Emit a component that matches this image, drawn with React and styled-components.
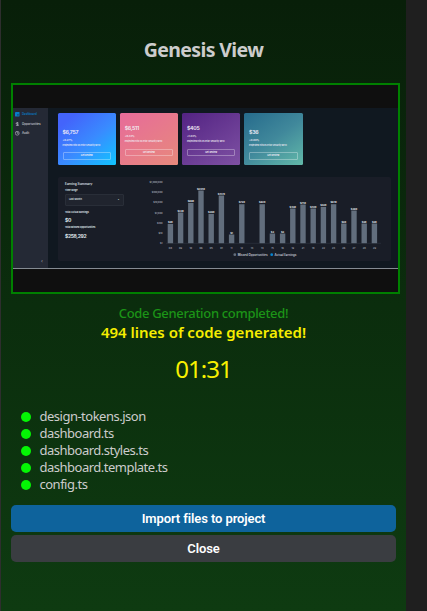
import React from 'react';
import styled, { createGlobalStyle } from 'styled-components';

const Global = createGlobalStyle`
  * { box-sizing: border-box; }
  body { margin: 0; background: #1f1f1f; overflow: hidden; }
`;

const Page = styled.div`
  width: 427px;
  height: 611px;
  padding-left: 1px;
  background: linear-gradient(90deg, #2e2e2e 1px, #1f1f1f 1px);
`;
const Panel = styled.main`
  width: 405px;
  height: 611px;
  padding: 36px 6px 0 10px;
  display: flex;
  flex-direction: column;
  background: linear-gradient(180deg, #081f09 0%, #0e3b11 100%);
  font-family: 'Noto Sans', 'Open Sans', sans-serif;
  color: #cccccc;
`;
const Title = styled.h1`
  width: 385px;
  height: 47px;
  margin: 0;
  font-size: 19.5px;
  line-height: 28px;
  font-weight: 700;
  letter-spacing: -0.62px;
  text-align: center;
  white-space: nowrap;
`;
const Preview = styled.section`
  flex: none;
  width: 389px;
  height: 211px;
  padding: 23px 0;
  border: 2px solid #008000;
  background: #0f0f0f;
`;
const Dashboard = styled.div`
  display: flex;
  height: 161px;
  border-bottom: 1px solid #848b92;
  background: #101820;
  font-family: Inter, sans-serif;
  color: #dfe2e7;
`;
const Sidebar = styled.nav`
  display: flex;
  flex-direction: column;
  width: 35px;
  padding: 1.5px 0 0 2px;
  background: #242935;
`;
const NavItem = styled.div`
  display: flex;
  align-items: center;
  gap: 2.5px;
  height: 9.7px;
  font-size: 2.8px;
  line-height: 5px;
  font-weight: 600;
  color: ${(p) => (p.$active ? '#087dc8' : '#c3c7ce')};
  svg { width: 4.5px; height: 4.5px; flex: none; }
`;
const Collapse = styled.div`
  margin: auto 5px 4px auto;
  font-size: 5px;
  line-height: 6px;
  color: #a5aab2;
`;
const Content = styled.div`
  width: 350px;
  padding: 5px 7px 0 9.5px;
`;
const Cards = styled.div`
  display: flex;
  gap: 3.7px;
  height: 52px;
`;
const Card = styled.article`
  width: 58.5px;
  height: 52px;
  padding: ${(p) => p.$top}px 5px 0;
  border-radius: 1.5px;
  background: ${(p) => p.$fill};
  color: #f1edf6;
  white-space: nowrap;
`;
const Amount = styled.div`
  font-size: 5.2px;
  line-height: 8px;
  font-weight: 600;
  letter-spacing: -0.25px;
`;
const Change = styled.div`
  margin-top: 2px;
  font-size: 2.6px;
  line-height: 5px;
  font-weight: 600;
`;
const Caption = styled.div`
  font-size: 2.15px;
  line-height: 6px;
  font-weight: 600;
`;
const CardButton = styled.div`
  height: 7.5px;
  margin-top: 3.5px;
  border: 1px solid #ffffff50;
  border-radius: 1px;
  font-size: 2.2px;
  line-height: 5.5px;
  font-weight: 700;
  text-align: center;
`;
const Summary = styled.section`
  display: flex;
  width: 333px;
  height: 84px;
  margin-top: 12px;
  padding-left: 7.5px;
  border-radius: 2px;
  background: #191d27;
`;
const Figures = styled.div`
  width: 59px;
  padding-top: 3.5px;
  white-space: nowrap;
`;
const Heading = styled.div`
  font-size: 3.2px;
  line-height: 6px;
  font-weight: 600;
`;
const Label = styled.div`
  margin-top: ${(p) => p.$gap || 0}px;
  font-size: 2.3px;
  line-height: 5px;
  font-weight: 700;
`;
const Select = styled.div`
  display: flex;
  justify-content: space-between;
  height: 12px;
  margin-top: 0.5px;
  padding: 0 4px 0 3px;
  border: 1px solid #292e38;
  border-radius: 1px;
  background: #20242e;
  font-size: 2.4px;
  line-height: 10px;
  font-weight: 600;
`;
const Total = styled.div`
  height: 9.5px;
  margin-top: 1.3px;
  font-size: 5px;
  line-height: 8px;
  font-weight: 700;
  letter-spacing: -0.35px;
`;
const Chart = styled.svg`
  width: 266px;
  height: 84px;
  font-family: Inter, sans-serif;
  font-size: 2.4px;
  font-weight: 500;
  fill: #b9bec6;
`;
const Status = styled.p`
  width: 385px;
  margin: 10px 0 0;
  font-size: 13px;
  line-height: 19px;
  font-weight: 500;
  letter-spacing: -0.33px;
  text-align: center;
  color: #1c9417;
`;
const LineCount = styled.p`
  width: 385px;
  margin: -1px 0 0;
  font-size: 15px;
  line-height: 20px;
  font-weight: 600;
  text-align: center;
  color: #f6ed00;
`;
const Timer = styled.time`
  width: 385px;
  margin-top: 10px;
  font-size: 24px;
  line-height: 34px;
  text-align: center;
  letter-spacing: -1px;
  color: #f8f000;
`;
const Files = styled.ul`
  list-style: none;
  margin: 22px 0 12px;
  padding: 0 0 0 10px;
`;
const FileRow = styled.li`
  display: flex;
  align-items: center;
  gap: 8.5px;
  height: 17px;
  font-size: 13px;
  line-height: 17px;
  letter-spacing: -0.5px;
  &::before {
    content: '';
    width: 10px;
    height: 10px;
    border-radius: 50%;
    background: #04f604;
  }
`;
const Button = styled.button`
  flex: none;
  width: 385px;
  height: 27px;
  margin: 0 0 3px;
  padding: 0;
  border: 0;
  border-radius: 5px;
  background: ${(p) => (p.$primary ? '#0e639c' : '#3a3d41')};
  color: #fff;
  font: 600 13px/27px Roboto, 'Liberation Sans', sans-serif;
  letter-spacing: -0.1px;
`;

const cards = [
  ['$6,757', '+0.27%', 'Projected Hits vs Prior Security MTD', 'linear-gradient(140deg, #4364fb 15%, #398bff 55%, #10c5ff)', 14.5],
  ['$6,511', '+8.33%', 'Projected Hits vs Prior Security MTD', 'linear-gradient(145deg, #e76b9a, #e7897c)', 11],
  ['$405', '+1.03%', 'Projected Hits vs Prior Security MTD', 'linear-gradient(145deg, #532383, #7e51a3)', 11],
  ['$36', '+0.00%', 'Projected Hits vs Prior Security MTD', 'linear-gradient(145deg, #266b8c, #40889b 50%, #62b9a9)', 14.5],
];
const barHeights = [19.3, 30.7, 40.3, 52.7, 29.3, 47.7, 8.7, 39, 0, 39, 9.7, 9.7, 34.7, 38.7, 34.7, 36.3, 39, 19.7, 32.7, 19.7, 19.7];
const barLabels = ['$9k', '$33k', '$88k', '$204k', '$28k', '$157k', '$1', '$79k', '', '$82k', '$3', '$3', '$49k', '$75k', '$50k', '$62k', '$84k', '$9k', '$38k', '$9k', '$9k'];
const days = ['08', '09', '10', '06', '05', '01', '11', '12', '13', '14', '15', '16', '19', '21', '18', '22', '23', '26', '27', '28', '29'];
const yLabels = ['$1,000,000', '$100,000', '$10,000', '$1,000', '$100', '$10', '$1'];
const files = ['design-tokens.json', 'dashboard.ts', 'dashboard.styles.ts', 'dashboard.template.ts', 'config.ts'];

function EarningsChart() {
  return (
    <Chart viewBox="0 0 266 84">
      {yLabels.map((t, i) => (
        <text key={t} x="38.5" y={6 + i * 10.17} textAnchor="end">{t}</text>
      ))}
      <path d="M42 66.3H257" stroke="#343b47" strokeWidth=".5" />
      {barHeights.map((h, i) => {
        const x = 46.4 + i * 10.2;
        return (
          <g key={i}>
            <rect x={x - 2.7} y={66.2 - h} width="5.4" height={h} fill="#626e7d" />
            <text x={x} y={65.2 - h} textAnchor="middle" fontSize="2.5" fontWeight="700" fill="#e1e4e8">{barLabels[i]}</text>
            <text x={x} y="71.7" textAnchor="middle">{days[i]}</text>
          </g>
        );
      })}
      <circle cx="110.8" cy="77.7" r="1.4" fill="#656f7d" />
      <text x="113.7" y="78.8" fontSize="2.85" fontWeight="700">Missed Opportunities</text>
      <circle cx="147.7" cy="77.7" r="1.4" fill="#0785d1" />
      <text x="150.5" y="78.8" fontSize="2.85" fontWeight="700">Actual Earnings</text>
    </Chart>
  );
}

export default function App() {
  return (
    <>
      <Global />
      <Page>
        <Panel>
          <Title>Genesis View</Title>
          <Preview>
            <Dashboard>
              <Sidebar>
                <NavItem $active>
                  <svg viewBox="0 0 10 10"><rect width="10" height="10" rx="1" fill="#087dc8" /><path d="M5 5h3v3H5z" fill="#173b5d" /></svg>
                  Dashboard
                </NavItem>
                <NavItem>
                  <svg viewBox="0 0 10 10" fill="none" stroke="currentColor" strokeWidth="1.4"><path d="M8 2.5C6 1 2.5 1.5 2.5 3.3S8 4.5 8 6.8 4 9 2 7.6M5 0v10" /></svg>
                  Opportunities
                </NavItem>
                <NavItem>
                  <svg viewBox="0 0 10 10" fill="none" stroke="currentColor" strokeWidth="1.3"><circle cx="5" cy="5" r="4.3" /><path d="M5 1v4h3" /></svg>
                  Audit
                </NavItem>
                <Collapse>‹</Collapse>
              </Sidebar>
              <Content>
                <Cards>
                  {cards.map(([amount, change, caption, fill, top]) => (
                    <Card key={amount} $fill={fill} $top={top}>
                      <Amount>{amount}</Amount>
                      <Change>{change}</Change>
                      <Caption>{caption}</Caption>
                      <CardButton>Get Review</CardButton>
                    </Card>
                  ))}
                </Cards>
                <Summary>
                  <Figures>
                    <Heading>Earning Summary</Heading>
                    <Label $gap={1.5}>Time range</Label>
                    <Select><span>Last Month</span><span>▾</span></Select>
                    <Label $gap={4}>Total Actual Earnings</Label>
                    <Total>$0</Total>
                    <Label>Total Missed Opportunities</Label>
                    <Total>$258,292</Total>
                  </Figures>
                  <EarningsChart />
                </Summary>
              </Content>
            </Dashboard>
          </Preview>
          <Status>Code Generation completed!</Status>
          <LineCount>494 lines of code generated!</LineCount>
          <Timer>01:31</Timer>
          <Files>{files.map((f) => <FileRow key={f}>{f}</FileRow>)}</Files>
          <Button $primary>Import files to project</Button>
          <Button>Close</Button>
        </Panel>
      </Page>
    </>
  );
}
